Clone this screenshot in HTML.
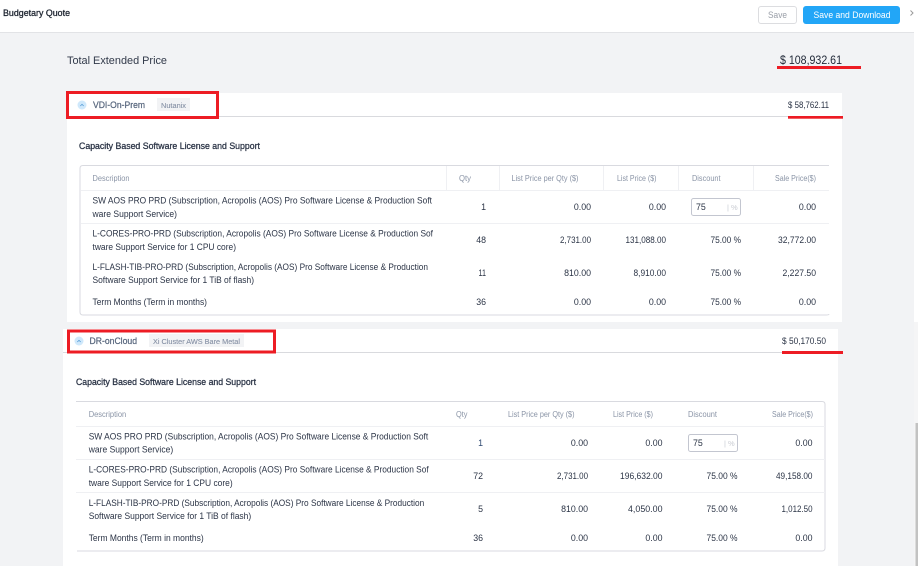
<!DOCTYPE html>
<html lang="en">
<head>
<meta charset="utf-8">
<title>Budgetary Quote</title>
<style>
html,body{margin:0;padding:0;width:918px;height:566px;overflow:hidden;background:#fff}
svg{display:block}
text{font-family:"Liberation Sans",sans-serif;font-size:8.8px;fill:#2b3446}
.h{font-size:8px;fill:#8a94a6}
.b{font-size:8.8px;fill:#2b3446;stroke:#2b3446;stroke-width:.28px}
.e{text-anchor:end}
.n{font-size:9px;fill:#56657c;stroke:#56657c;stroke-width:.22px}
.c{font-size:7.6px;fill:#8792a6;stroke:#8792a6;stroke-width:.12px}
</style>
</head>
<body>
<svg width="918" height="566" viewBox="0 0 918 566" xmlns="http://www.w3.org/2000/svg">
<!-- page -->
<rect width="918" height="566" fill="#fff"/>
<rect x="0" y="33" width="914" height="533" fill="#f2f3f5"/>
<rect x="914" y="322" width="4" height="244" fill="#f5f5f6"/>
<rect x="915.5" y="423" width="2.5" height="143" fill="#c2c2c2"/>
<rect x="0" y="32" width="914" height="1" fill="#e2e3e6"/>

<!-- top bar -->
<text x="3" y="16" class="b" textLength="67" lengthAdjust="spacingAndGlyphs" style="fill:#1d2430;stroke:#1d2430">Budgetary Quote</text>
<rect x="758.5" y="6.5" width="38" height="17" rx="2.5" fill="#fff" stroke="#dcdde0"/>
<text x="768" y="18" textLength="19" lengthAdjust="spacingAndGlyphs" style="fill:#9a9fa8">Save</text>
<rect x="803" y="6" width="97" height="18" rx="3" fill="#22a6f7"/>
<text x="813.5" y="18" textLength="77" lengthAdjust="spacingAndGlyphs" style="fill:#fff">Save and Download</text>
<path d="M910.5 10.5l2.5 2.5-2.5 2.5" fill="none" stroke="#9a9a9a" stroke-width="1"/>

<!-- total -->
<text x="67" y="64" textLength="100" lengthAdjust="spacingAndGlyphs" style="font-size:11px;fill:#323a4a">Total Extended Price</text>
<text x="780" y="64" textLength="62" lengthAdjust="spacingAndGlyphs" style="font-size:11.5px;fill:#1f2736">$ 108,932.61</text>

<!-- panel 1 -->
<rect x="67" y="93" width="775" height="229" fill="#fff"/>
<rect x="67" y="116" width="775" height="1" fill="#d9dade"/>
<circle cx="82" cy="105" r="4.5" fill="#cfe8fb"/>
<path d="M80.3 106l1.7-1.7 1.7 1.7" fill="none" stroke="#5a9fd8" stroke-width=".8"/>
<text x="93" y="108" class="n" textLength="52" lengthAdjust="spacingAndGlyphs">VDI-On-Prem</text>
<rect x="157" y="98" width="33" height="13" fill="#f2f3f5"/>
<text x="161" y="108" class="c" textLength="25" lengthAdjust="spacingAndGlyphs">Nutanix</text>
<text x="788" y="108" textLength="41" lengthAdjust="spacingAndGlyphs" style="fill:#2b3446">$ 58,762.11</text>
<text x="79" y="149" class="b" textLength="181" lengthAdjust="spacingAndGlyphs">Capacity Based Software License and Support</text>

<!-- table 1 -->
<path d="M829 165.5H83q-3 0-3 3V312q0 3 3 3H826q3 0 3-1" fill="none" stroke="#d9dae0"/>
<path d="M446.5 166v24M499.5 166v24M603.5 166v24M678.5 166v24M753.5 166v24" stroke="#eff0f3"/>
<path d="M81 190.5h748M81 223.5h748" stroke="#eff0f3"/>
<text x="92.5" y="181" class="h" textLength="37" lengthAdjust="spacingAndGlyphs">Description</text>
<text x="459" y="181" class="h" textLength="12" lengthAdjust="spacingAndGlyphs">Qty</text>
<text x="511.5" y="181" class="h" textLength="67" lengthAdjust="spacingAndGlyphs">List Price per Qty ($)</text>
<text x="617" y="181" class="h" textLength="39.5" lengthAdjust="spacingAndGlyphs">List Price ($)</text>
<text x="692" y="181" class="h" textLength="28.5" lengthAdjust="spacingAndGlyphs">Discount</text>
<text x="775" y="181" class="h" textLength="41" lengthAdjust="spacingAndGlyphs">Sale Price($)</text>

<text x="92.5" y="203.5" textLength="339.5" lengthAdjust="spacingAndGlyphs">SW AOS PRO PRD (Subscription, Acropolis (AOS) Pro Software License &amp; Production Soft</text>
<text x="92.5" y="217" textLength="84.5" lengthAdjust="spacingAndGlyphs">ware Support Service)</text>
<text x="92.5" y="236.5" textLength="340.5" lengthAdjust="spacingAndGlyphs">L-CORES-PRO-PRD (Subscription, Acropolis (AOS) Pro Software License &amp; Production Sof</text>
<text x="92.5" y="250" textLength="143.5" lengthAdjust="spacingAndGlyphs">tware Support Service for 1 CPU core)</text>
<text x="92.5" y="270" textLength="335.5" lengthAdjust="spacingAndGlyphs">L-FLASH-TIB-PRO-PRD (Subscription, Acropolis (AOS) Pro Software License &amp; Production</text>
<text x="92.5" y="283" textLength="161.5" lengthAdjust="spacingAndGlyphs">Software Support Service for 1 TiB of flash)</text>
<text x="92.5" y="305" textLength="114.5" lengthAdjust="spacingAndGlyphs">Term Months (Term in months)</text>

<text x="486" y="210" class="e">1</text>
<text x="591" y="210" class="e">0.00</text>
<text x="666" y="210" class="e">0.00</text>
<rect x="691.5" y="198.5" width="49" height="17" rx="2" fill="#fff" stroke="#c3c6d0"/>
<text x="696" y="210">75</text>
<text x="727" y="210" style="font-size:7.5px;fill:#c8cbd2">| %</text>
<text x="816" y="210" class="e">0.00</text>

<text x="486" y="243" class="e">48</text>
<text x="591" y="243" class="e" textLength="31" lengthAdjust="spacingAndGlyphs">2,731.00</text>
<text x="666" y="243" class="e" textLength="40.5" lengthAdjust="spacingAndGlyphs">131,088.00</text>
<text x="741" y="243" class="e" textLength="30.5" lengthAdjust="spacingAndGlyphs">75.00 %</text>
<text x="816" y="243" class="e" textLength="38" lengthAdjust="spacingAndGlyphs">32,772.00</text>

<text x="486" y="276" class="e" textLength="7.5" lengthAdjust="spacingAndGlyphs">11</text>
<text x="591" y="276" class="e">810.00</text>
<text x="666" y="276" class="e" textLength="32.5" lengthAdjust="spacingAndGlyphs">8,910.00</text>
<text x="741" y="276" class="e" textLength="30.5" lengthAdjust="spacingAndGlyphs">75.00 %</text>
<text x="816" y="276" class="e" textLength="33.5" lengthAdjust="spacingAndGlyphs">2,227.50</text>

<text x="486" y="305" class="e">36</text>
<text x="591" y="305" class="e">0.00</text>
<text x="666" y="305" class="e">0.00</text>
<text x="741" y="305" class="e" textLength="30.5" lengthAdjust="spacingAndGlyphs">75.00 %</text>
<text x="816" y="305" class="e">0.00</text>

<!-- panel 2 -->
<rect x="63" y="329" width="775" height="237" fill="#fff"/>
<rect x="63" y="352" width="775" height="1" fill="#d9dade"/>
<circle cx="79" cy="341" r="4.5" fill="#cfe8fb"/>
<path d="M77.3 342l1.7-1.7 1.7 1.7" fill="none" stroke="#5a9fd8" stroke-width=".8"/>
<text x="89.5" y="344" class="n" textLength="47.5" lengthAdjust="spacingAndGlyphs">DR-onCloud</text>
<rect x="149" y="334" width="95" height="13" fill="#f2f3f5"/>
<text x="153" y="344" class="c" textLength="87" lengthAdjust="spacingAndGlyphs">Xi Cluster AWS Bare Metal</text>
<text x="782" y="344" textLength="44" lengthAdjust="spacingAndGlyphs" style="fill:#2b3446">$ 50,170.50</text>
<text x="76" y="385" class="b" textLength="180" lengthAdjust="spacingAndGlyphs">Capacity Based Software License and Support</text>

<!-- table 2 -->
<path d="M76 401.5H822q3 0 3 3V548q0 3-3 3H77" fill="none" stroke="#d9dae0"/>
<path d="M76 426.5h749M76 459.5h749M76 492.5h749" stroke="#eff0f3"/>
<text x="88.7" y="417" class="h" textLength="37.5" lengthAdjust="spacingAndGlyphs">Description</text>
<text x="456" y="417" class="h" textLength="11.5" lengthAdjust="spacingAndGlyphs">Qty</text>
<text x="508" y="417" class="h" textLength="66.5" lengthAdjust="spacingAndGlyphs">List Price per Qty ($)</text>
<text x="613" y="417" class="h" textLength="40" lengthAdjust="spacingAndGlyphs">List Price ($)</text>
<text x="688" y="417" class="h" textLength="29" lengthAdjust="spacingAndGlyphs">Discount</text>
<text x="772" y="417" class="h" textLength="41" lengthAdjust="spacingAndGlyphs">Sale Price($)</text>

<text x="88.7" y="439.5" textLength="339.5" lengthAdjust="spacingAndGlyphs">SW AOS PRO PRD (Subscription, Acropolis (AOS) Pro Software License &amp; Production Soft</text>
<text x="88.7" y="452.5" textLength="84.5" lengthAdjust="spacingAndGlyphs">ware Support Service)</text>
<text x="88.7" y="472.5" textLength="340" lengthAdjust="spacingAndGlyphs">L-CORES-PRO-PRD (Subscription, Acropolis (AOS) Pro Software License &amp; Production Sof</text>
<text x="88.7" y="486" textLength="144" lengthAdjust="spacingAndGlyphs">tware Support Service for 1 CPU core)</text>
<text x="88.7" y="506" textLength="335.5" lengthAdjust="spacingAndGlyphs">L-FLASH-TIB-PRO-PRD (Subscription, Acropolis (AOS) Pro Software License &amp; Production</text>
<text x="88.7" y="519" textLength="162.5" lengthAdjust="spacingAndGlyphs">Software Support Service for 1 TiB of flash)</text>
<text x="88.7" y="541" textLength="115" lengthAdjust="spacingAndGlyphs">Term Months (Term in months)</text>

<text x="483" y="446" class="e" style="fill:#2f4a72">1</text>
<text x="588" y="446" class="e">0.00</text>
<text x="662.5" y="446" class="e">0.00</text>
<rect x="688.5" y="434.5" width="49" height="17" rx="2" fill="#fff" stroke="#c3c6d0"/>
<text x="693" y="446">75</text>
<text x="724" y="446" style="font-size:7.5px;fill:#c8cbd2">| %</text>
<text x="812.5" y="446" class="e">0.00</text>

<text x="483" y="479" class="e">72</text>
<text x="588" y="479" class="e" textLength="31" lengthAdjust="spacingAndGlyphs">2,731.00</text>
<text x="662.5" y="479" class="e" textLength="42.5" lengthAdjust="spacingAndGlyphs">196,632.00</text>
<text x="737.5" y="479" class="e" textLength="31" lengthAdjust="spacingAndGlyphs">75.00 %</text>
<text x="812.5" y="479" class="e" textLength="36.5" lengthAdjust="spacingAndGlyphs">49,158.00</text>

<text x="483" y="512" class="e">5</text>
<text x="588" y="512" class="e">810.00</text>
<text x="662.5" y="512" class="e" textLength="34.5" lengthAdjust="spacingAndGlyphs">4,050.00</text>
<text x="737.5" y="512" class="e" textLength="31" lengthAdjust="spacingAndGlyphs">75.00 %</text>
<text x="812.5" y="512" class="e" textLength="31" lengthAdjust="spacingAndGlyphs">1,012.50</text>

<text x="483" y="541" class="e">36</text>
<text x="588" y="541" class="e">0.00</text>
<text x="662.5" y="541" class="e">0.00</text>
<text x="737.5" y="541" class="e" textLength="31" lengthAdjust="spacingAndGlyphs">75.00 %</text>
<text x="812.5" y="541" class="e">0.00</text>

<!-- red annotations -->
<rect x="67.5" y="92.5" width="150" height="25" fill="none" stroke="#ed1c24" stroke-width="3"/>
<rect x="68.5" y="331" width="206" height="21" fill="none" stroke="#ed1c24" stroke-width="3"/>
<rect x="777" y="66" width="84" height="3" fill="#ed1c24"/>
<rect x="788" y="116" width="55" height="2.7" fill="#ed1c24"/>
<rect x="782" y="351" width="61" height="3" fill="#ed1c24"/>
</svg>
</body>
</html>
